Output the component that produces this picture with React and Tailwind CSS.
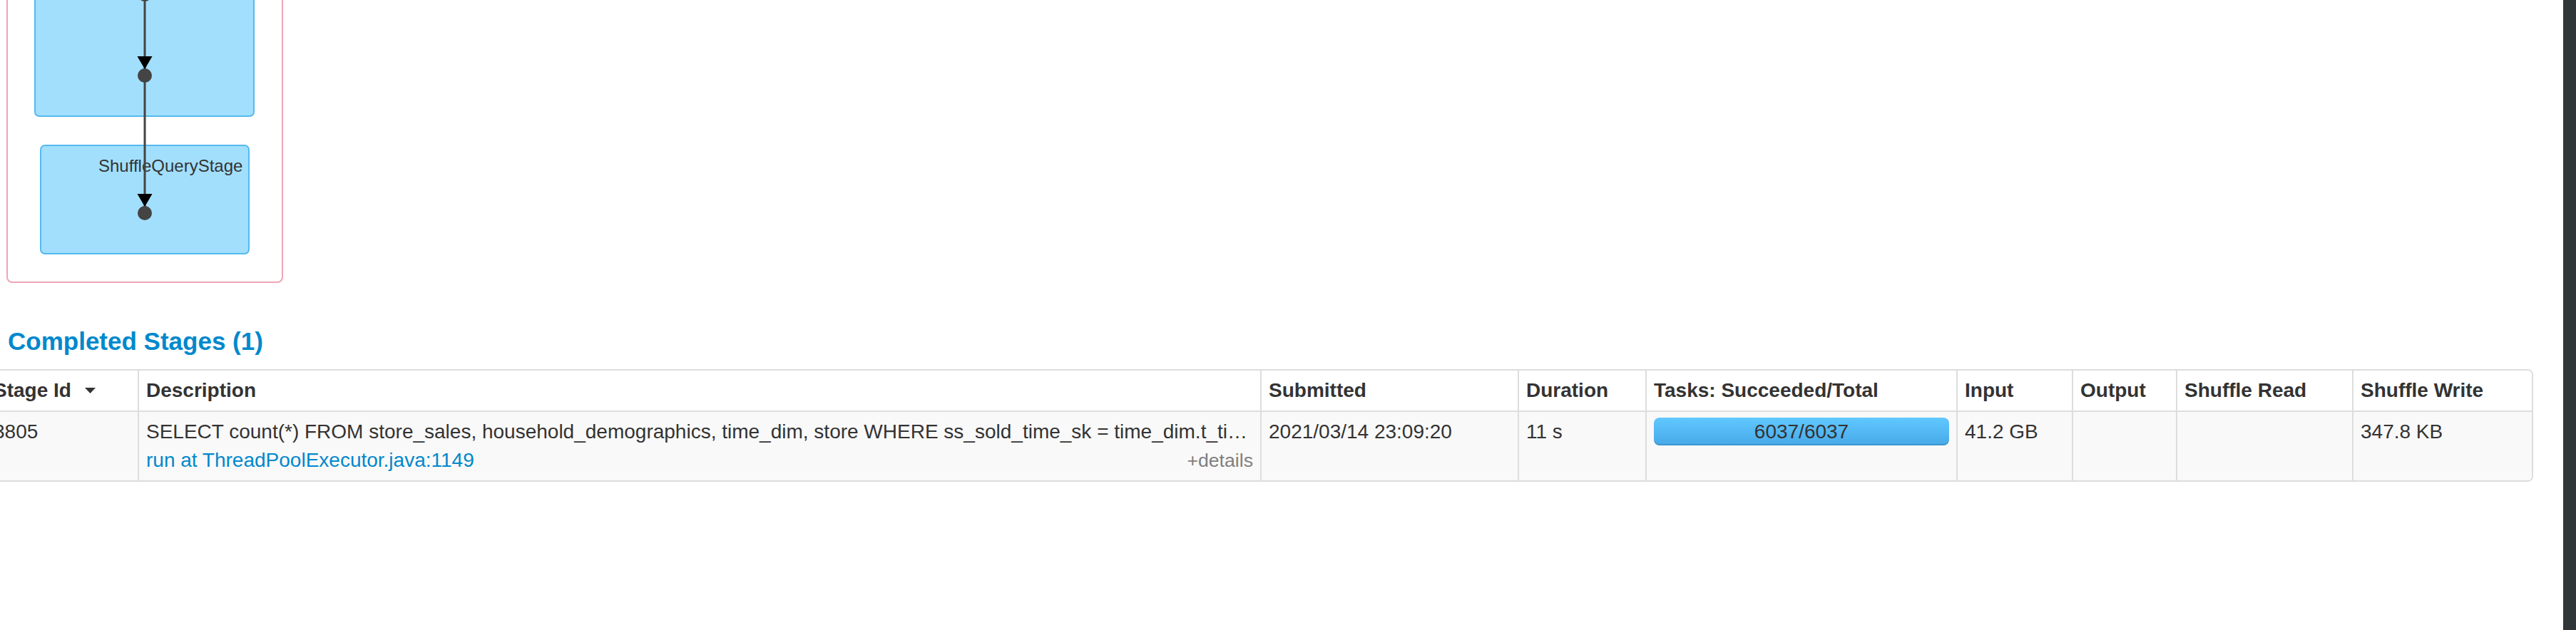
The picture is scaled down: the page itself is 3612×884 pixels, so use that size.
import React from "react";

function Dag() {
  return (
    <svg width="420" height="420" viewBox="0 0 420 420" className="block">
      <rect x="10" y="-60" width="386" height="456" rx="7" fill="#ffffff" stroke="#eda5b6" strokeWidth="2" />
      <rect x="49" y="-60" width="307" height="223" rx="6" fill="#a2dffd" stroke="#55baef" strokeWidth="2" />
      <rect x="57" y="204" width="292" height="152" rx="6" fill="#a2dffd" stroke="#55baef" strokeWidth="2" />
      <text x="138" y="241" fontSize="24" fill="#333333" fontFamily="'Liberation Sans', Arial, sans-serif">
        ShuffleQueryStage
      </text>
      <line x1="203" y1="-20" x2="203" y2="299" stroke="#444444" strokeWidth="3" />
      <circle cx="203" cy="-8" r="10" fill="#444444" />
      <polygon points="192.5,79 213.5,79 203,97" fill="#000000" />
      <circle cx="203" cy="106" r="10" fill="#444444" />
      <polygon points="192.5,272 213.5,272 203,290" fill="#000000" />
      <circle cx="203" cy="299" r="10" fill="#444444" />
    </svg>
  );
}

const headers = [
  "Stage Id",
  "Description",
  "Submitted",
  "Duration",
  "Tasks: Succeeded/Total",
  "Input",
  "Output",
  "Shuffle Read",
  "Shuffle Write",
];

export default function App() {
  return (
    <div className="flex h-[884px] w-full bg-white font-['Liberation_Sans',Arial,sans-serif] text-[#333333]">
      <div className="flex-1 overflow-hidden">
        <Dag />
        <h4 className="mt-[39px] mb-[19px] pl-[11px] text-[35px] leading-[40px] font-bold text-[#0088cc]">
          Completed Stages (1)
        </h4>
        <div className="ml-[-21px] w-fit overflow-hidden rounded-[8px] border-2 border-[#dddddd]">
          <div className="grid grid-cols-[212px_1574px_361px_179px_436px_162px_146px_247px_252px] text-[28px] leading-[40px]">
            {headers.map((h, i) => (
              <div
                key={h}
                className={
                  "flex items-center whitespace-nowrap border-b-2 border-[#dddddd] bg-white px-[10px] py-2 font-bold " +
                  (i > 0 ? "border-l-2" : "")
                }
              >
                <span>{h}</span>
                {i === 0 && (
                  <svg width="15" height="8" viewBox="0 0 15 8" className="ml-[19px]">
                    <polygon points="0,0 15,0 7.5,8" fill="#333333" />
                  </svg>
                )}
              </div>
            ))}
            <div className="bg-[#f9f9f9] px-[10px] py-2 whitespace-nowrap">3805</div>
            <div className="border-l-2 border-[#dddddd] bg-[#f9f9f9] px-[10px] py-2">
              <div className="overflow-hidden whitespace-nowrap">
                SELECT count(*) FROM store_sales, household_demographics, time_dim, store WHERE ss_sold_time_sk = time_dim.t_ti…
              </div>
              <div className="flex items-center justify-between whitespace-nowrap">
                <span className="text-[#0088cc]">run at ThreadPoolExecutor.java:1149</span>
                <span className="text-[26.67px] text-[#808080]">+details</span>
              </div>
            </div>
            <div className="border-l-2 border-[#dddddd] bg-[#f9f9f9] px-[10px] py-2 whitespace-nowrap">2021/03/14 23:09:20</div>
            <div className="border-l-2 border-[#dddddd] bg-[#f9f9f9] px-[10px] py-2 whitespace-nowrap">11 s</div>
            <div className="border-l-2 border-[#dddddd] bg-[#f9f9f9] px-[10px] py-2">
              <div className="flex h-[39px] items-center justify-center rounded-[8px] bg-gradient-to-b from-[#61c8fe] to-[#46a9e9] leading-[39px] shadow-[inset_0_-2px_0_rgba(0,0,0,0.12)]">
                6037/6037
              </div>
            </div>
            <div className="border-l-2 border-[#dddddd] bg-[#f9f9f9] px-[10px] py-2 whitespace-nowrap">41.2 GB</div>
            <div className="border-l-2 border-[#dddddd] bg-[#f9f9f9] px-[10px] py-2"></div>
            <div className="border-l-2 border-[#dddddd] bg-[#f9f9f9] px-[10px] py-2"></div>
            <div className="border-l-2 border-[#dddddd] bg-[#f9f9f9] px-[10px] py-2 whitespace-nowrap">347.8 KB</div>
          </div>
        </div>
      </div>
      <div className="h-[884px] w-[18px] shrink-0 bg-[#313639]"></div>
    </div>
  );
}
